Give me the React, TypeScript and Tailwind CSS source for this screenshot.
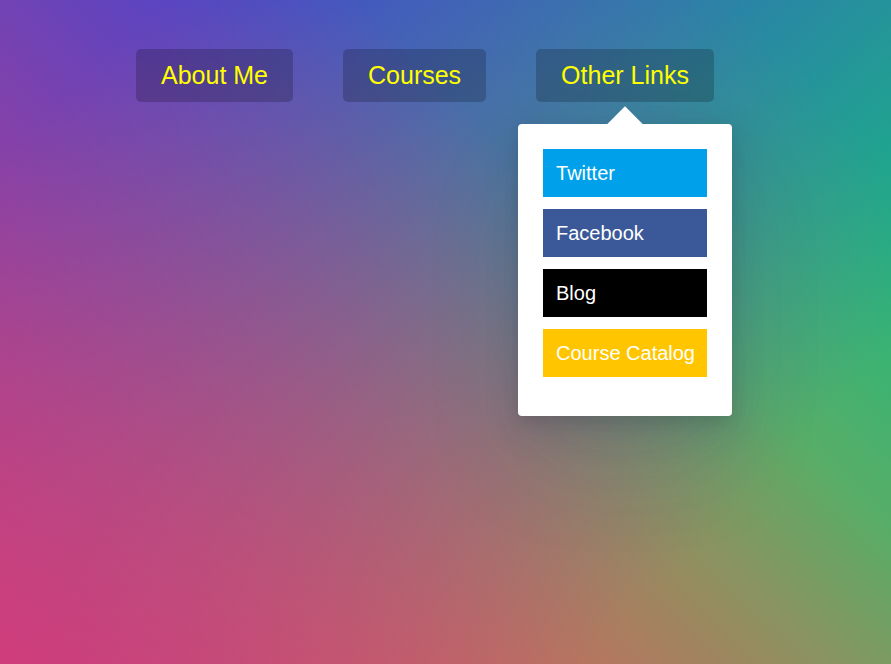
import React from 'react'

const links = [
  { label: 'Twitter', className: 'bg-[#00a0ea]' },
  { label: 'Facebook', className: 'bg-[#3b5998]' },
  { label: 'Blog', className: 'bg-black' },
  { label: 'Course Catalog', className: 'bg-[#ffc600]' },
]

const App: React.FC = () => {
  return (
    <div className="min-h-screen bg-[#cf9838] bg-[linear-gradient(45deg,rgba(208,60,124,1)_0%,rgba(208,60,124,0)_66%),linear-gradient(135deg,rgba(62,70,210,1)_10%,rgba(62,70,210,0)_80%),linear-gradient(225deg,rgba(25,185,128,1)_10%,rgba(25,185,128,0)_80%)] font-['Liberation_Sans',Arial,sans-serif]">
      <nav className="pt-[49px] pl-[136px]">
        <ul className="flex gap-[50px]">
          <li>
            <a className="block px-[25px] py-3 rounded-[5px] bg-black/20 text-[25px] leading-[29px] text-[#ffff00]">About Me</a>
          </li>
          <li>
            <a className="block px-[25px] py-3 rounded-[5px] bg-black/20 text-[25px] leading-[29px] text-[#ffff00]">Courses</a>
          </li>
          <li className="relative">
            <a className="block px-[25px] py-3 rounded-[5px] bg-black/20 text-[25px] leading-[29px] text-[#ffff00]">Other Links</a>
            <div className="absolute top-[calc(100%+22px)] left-1/2 -translate-x-1/2 w-[214px] bg-white rounded-[4px] shadow-[0_50px_100px_rgba(50,50,93,0.1),0_15px_35px_rgba(50,50,93,0.15),0_5px_15px_rgba(0,0,0,0.1)]">
              <span className="absolute left-1/2 top-0 w-[25px] h-[25px] bg-white -translate-x-1/2 -translate-y-1/2 rotate-45" />
              <ul className="relative flex flex-col gap-3 px-[25px] pt-[25px] pb-[39px]">
                {links.map((l) => (
                  <li key={l.label}>
                    <a className={`flex items-center h-12 pl-[13px] text-[20px] text-white ${l.className}`}>{l.label}</a>
                  </li>
                ))}
              </ul>
            </div>
          </li>
        </ul>
      </nav>
    </div>
  )
}

export default App
